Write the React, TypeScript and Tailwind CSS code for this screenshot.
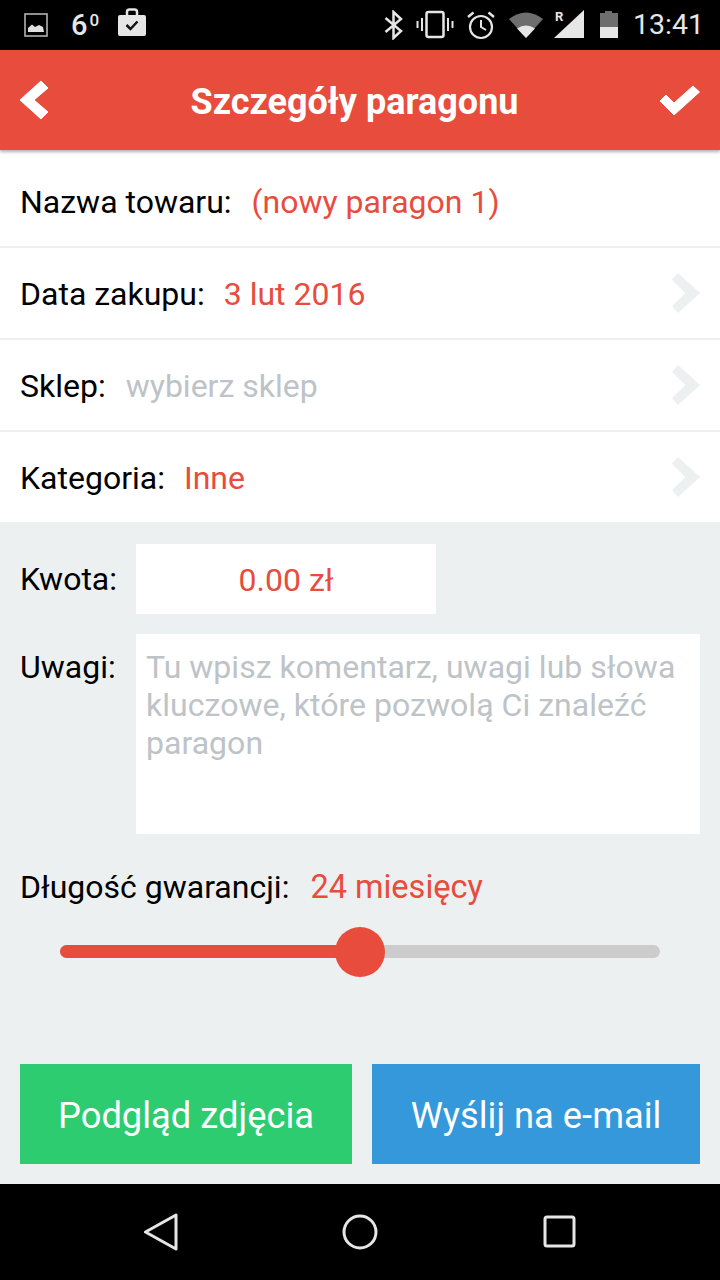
function Chevron() {
  return (
    <svg width="28" height="40" viewBox="0 0 28 40" className="text-[#ecf0f1]">
      <path d="M6 0.500 L27.500 20 L6 39.500 L0.500 33 L14 20 L0.500 7 Z" fill="currentColor" strokeLinejoin="round" stroke="currentColor" strokeWidth="1" />
    </svg>
  );
}

function StatusBar() {
  return (
    <div className="h-[50px] bg-black flex items-center justify-between pl-[24px] pr-[16px] text-[#e6e6e6]">
      <div className="flex items-center">
        <svg width="24" height="24" viewBox="0 0 24 24">
          <rect x="1" y="1" width="22" height="22" fill="none" stroke="#bdbdbd" strokeWidth="1.5" />
          <path d="M4 19 V15 L8 11.500 L11 14 L15 12 L19 14 L20 19 Z" fill="#e0e0e0" />
        </svg>
        <span className="ml-[23px] text-[29px] font-medium leading-none flex items-start">
          6<span className="text-[17px] mt-[1px] ml-[2px]">0</span>
        </span>
        <svg width="30" height="30" viewBox="0 0 30 30" className="ml-[18px] mb-[4px]">
          <path d="M10 7 V4 Q10 1.500 12.500 1.500 H17.500 Q20 1.500 20 4 V7" fill="none" stroke="#e6e6e6" strokeWidth="2.500" />
          <rect x="1" y="7" width="28" height="21" rx="2" fill="#e6e6e6" />
          <path d="M9.500 17 L13.500 21 L20.500 13.500" fill="none" stroke="#111" strokeWidth="2.500" />
        </svg>
      </div>
      <div className="flex items-center">
        <svg width="20" height="30" viewBox="0 0 20 30">
          <path d="M1.500 8 L17 21 L9.500 28 V2 L17 9 L1.500 22" fill="none" stroke="#e6e6e6" strokeWidth="2.500" />
        </svg>
        <svg width="38" height="30" viewBox="0 0 38 30" className="ml-[12px]">
          <rect x="10.500" y="2" width="17" height="25" rx="2" fill="none" stroke="#e6e6e6" strokeWidth="2.500" />
          <path d="M6 8 V21 M1.500 11 V18 M32 8 V21 M36.500 11 V18" stroke="#e6e6e6" strokeWidth="2" fill="none" />
        </svg>
        <svg width="30" height="30" viewBox="0 0 30 30" className="ml-[12px]">
          <circle cx="15" cy="17" r="11" fill="none" stroke="#e6e6e6" strokeWidth="2.200" />
          <path d="M15 10 V17 L20 20" fill="none" stroke="#e6e6e6" strokeWidth="2" />
          <path d="M2 7 L7.500 2.500 M28 7 L22.500 2.500" stroke="#e6e6e6" strokeWidth="2.400" fill="none" />
        </svg>
        <svg width="36" height="30" viewBox="0 0 36 30" className="ml-[12px]">
          <path d="M1 9 Q18 -4 35 9 L18 28 Z" fill="#6e6e6e" />
          <path d="M9 18.500 Q18 12.500 27 18.500 L18 28 Z" fill="#e6e6e6" />
        </svg>
        <div className="relative w-[30px] h-[30px] ml-[10px]">
          <svg width="30" height="30" viewBox="0 0 30 30" className="absolute left-0 top-0">
            <path d="M0 28 L30 0 V28 Z" fill="#e6e6e6" />
          </svg>
          <span className="absolute left-[1px] top-[-1px] text-[13px] font-bold leading-[16px]">R</span>
        </div>
        <svg width="20" height="30" viewBox="0 0 20 30" className="ml-[15px]">
          <path d="M6 1 H13 V3 H19 V28 H1 V3 H6 Z" fill="#6e6e6e" />
          <rect x="1" y="17" width="18" height="11" fill="#e6e6e6" />
        </svg>
        <span className="ml-[14px] mt-[1px] text-[28.500px] leading-none">13:41</span>
      </div>
    </div>
  );
}

function Row({ label, value, muted, last }: { label: string; value: string; muted?: boolean; last?: boolean }) {
  return (
    <div className={`flex items-center justify-between px-[20px] bg-white ${last ? 'h-[90px]' : 'h-[92px] border-b-2 border-[#ecf0f1]'}`}>
      <div className="flex items-center pt-[2px]">
        <span className="text-black">{label}</span>
        <span className={`${muted ? 'ml-[20px] text-[#bdc3c7]' : 'ml-[19px] text-[#e74c3c]'}`}>{value}</span>
      </div>
      <Chevron />
    </div>
  );
}

export default function App() {
  return (
    <div className="w-[720px] h-[1280px] flex flex-col bg-[#ecf0f1] text-[32px] font-['Roboto',sans-serif] overflow-hidden">
      <StatusBar />

      <div className="relative h-[100px] bg-[#e74c3c] flex items-center justify-center pr-[11px] pt-[4px] shadow-[0_2px_3px_rgba(0,0,0,0.3)] z-10">
        <svg width="32" height="40" viewBox="0 0 32 40" className="absolute left-[19px] top-[30px]">
          <path d="M22 1 L1 20 L22 39 L29 32 L15 20 L29 8 Z" fill="#fff" stroke="#fff" strokeWidth="1" strokeLinejoin="round" />
        </svg>
        <h1 className="text-[36px] font-bold text-white">Szczegóły paragonu</h1>
        <svg width="42" height="32" viewBox="0 0 42 32" className="absolute right-[19px] top-[35px]">
          <path d="M1 16 L7 10 L15 18 L34 1 L40.500 7 L15 30 Z" fill="#fff" stroke="#fff" strokeWidth="1" strokeLinejoin="round" />
        </svg>
      </div>

      <div className="flex flex-col">
        <div className="h-[98px] bg-white border-b-2 border-[#ecf0f1] flex items-center pl-[20px] pt-[8px]">
          <span className="text-black">Nazwa towaru:</span>
          <span className="ml-[20px] text-[#e74c3c]">(nowy paragon 1)</span>
        </div>
        <Row label="Data zakupu:" value="3 lut 2016" />
        <Row label="Sklep:" value="wybierz sklep" muted />
        <Row label="Kategoria:" value="Inne" last />
      </div>

      <div className="flex flex-col flex-1 px-[20px] pt-[22px]">
        <div className="flex items-center">
          <span className="w-[116px] text-black">Kwota:</span>
          <div className="w-[300px] h-[70px] pt-[2px] bg-white flex items-center justify-center text-[#e74c3c]">0.00 zł</div>
        </div>
        <div className="flex mt-[20px]">
          <span className="w-[116px] text-black leading-[38px] pt-[14px]">Uwagi:</span>
          <div className="w-[564px] h-[200px] bg-white px-[10px] pt-[14px] leading-[38px] tracking-[0.03px] text-[#bdc3c7]">
            Tu wpisz komentarz, uwagi lub słowa kluczowe, które pozwolą Ci znaleźć paragon
          </div>
        </div>
        <div className="flex items-center mt-[34px] h-[38px]">
          <span className="text-black">Długość gwarancji:</span>
          <span className="ml-[21px] text-[32.500px] text-[#e74c3c]">24 miesięcy</span>
        </div>
        <div className="relative mx-[40px] mt-[39px] h-[13px] rounded-full bg-[#cccccc]">
          <div className="h-full w-1/2 rounded-l-full bg-[#e74c3c]" />
          <div className="absolute left-[275px] top-[-18.500px] w-[50px] h-[50px] rounded-full bg-[#e74c3c]" />
        </div>
        <div className="flex gap-[20px] mt-[106px] text-[36.300px] text-white">
          <div className="w-[332px] h-[100px] pt-[4px] bg-[#2ecc71] flex items-center justify-center">Podgląd zdjęcia</div>
          <div className="w-[328px] h-[100px] pt-[4px] bg-[#3498db] flex items-center justify-center">Wyślij na e-mail</div>
        </div>
      </div>

      <div className="h-[96px] bg-black flex items-center pl-[143px] shrink-0">
        <svg width="36" height="38" viewBox="0 0 36 38">
          <path d="M2.500 19 L33 2 V36 Z" fill="none" stroke="#e6e6e6" strokeWidth="3" strokeLinejoin="round" />
        </svg>
        <svg width="36" height="36" viewBox="0 0 36 36" className="ml-[163px]">
          <circle cx="18" cy="18" r="16" fill="none" stroke="#e6e6e6" strokeWidth="3" />
        </svg>
        <svg width="34" height="34" viewBox="0 0 34 34" className="ml-[165px]">
          <rect x="2" y="2" width="29" height="29" rx="2" fill="none" stroke="#e6e6e6" strokeWidth="3" />
        </svg>
      </div>
    </div>
  );
}
